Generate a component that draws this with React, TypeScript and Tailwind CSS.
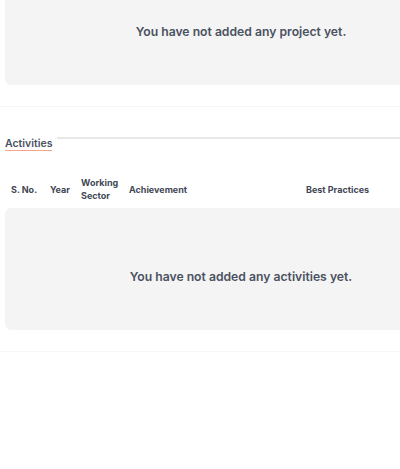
import React from 'react'

const headers = [
  { label: 'S. No.', w: 'w-[39px]' },
  { label: 'Year', w: 'w-[31px]' },
  { label: 'Working Sector', w: 'w-[48px]' },
  { label: 'Achievement', w: 'w-[177px]' },
  { label: 'Best Practices', w: 'w-[90px]' }
]

function EmptyCard({ text, className }: { text: string; className: string }): React.JSX.Element {
  return (
    <div className={`ml-[5px] w-[472px] bg-[#f4f4f4] text-center ${className}`}>
      <p className="text-[12.2px] font-semibold leading-5 text-[#4a5160]">{text}</p>
    </div>
  )
}

export default function App(): React.JSX.Element {
  return (
    <div
      className="h-[469px] w-[400px] overflow-hidden bg-white leading-none"
      style={{ fontFamily: 'Inter, "Noto Sans", sans-serif' }}
    >
      {/* Projects (scrolled) */}
      <EmptyCard text="You have not added any project yet." className="h-[85px] rounded-b-[6px] pt-[22px]" />
      <div className="mt-[21px] h-px bg-[#f6f6f6]" />

      {/* Activities */}
      <div className="mt-[30px] flex items-start pl-[5px]">
        <div className="border-b-[1.5px] border-[#f4a58a] text-[10.5px] font-semibold leading-[13px] text-[#4a5160]">
          Activities
        </div>
        <div className="ml-[5px] h-[2px] flex-1 bg-[#e8e8e8]" />
      </div>

      <div className="mt-[25px] flex items-center pl-[11px]">
        {headers.map((h) => (
          <div key={h.label} className={`${h.w} shrink-0 text-[9px] font-bold leading-[13px] text-[#3f4756]`}>
            {h.label}
          </div>
        ))}
      </div>

      <EmptyCard text="You have not added any activities yet." className="mt-[6px] h-[122px] rounded-l-[6px] pt-[59px]" />
      <div className="mt-[21px] h-px bg-[#f8f8f8]" />
    </div>
  )
}
